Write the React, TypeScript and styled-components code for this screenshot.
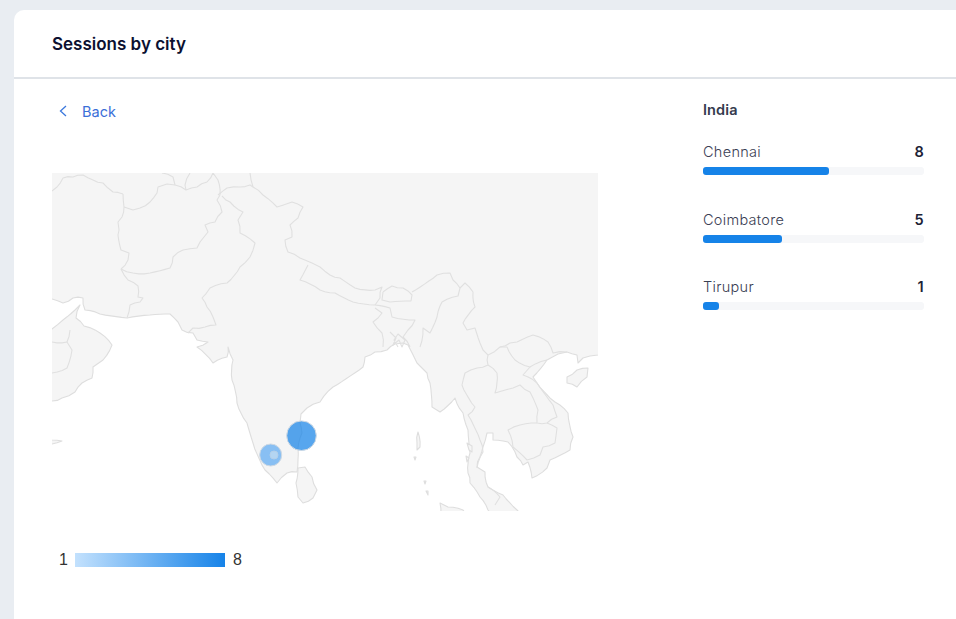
import React from 'react';
import styled, { createGlobalStyle } from 'styled-components';

const GlobalStyle = createGlobalStyle`
  html, body {
    margin: 0;
    height: 100%;
    overflow: hidden;
    background: #e9edf2;
  }
  #root {
    height: 100%;
  }
`;

const Page = styled.div`
  height: 100%;
  box-sizing: border-box;
  padding: 10px 0 0 14px;
  font-family: Inter, 'Open Sans', sans-serif;
`;

const Card = styled.section`
  height: 100%;
  background: #fff;
  border-radius: 10px 0 0 0;
`;

const Header = styled.header`
  height: 69px;
  box-sizing: border-box;
  padding: 24px 38px 0;
  border-bottom: 2px solid #dfe3e8;
`;

const Title = styled.h2`
  margin: 0;
  font-size: 17px;
  line-height: 20px;
  font-weight: 600;
  color: #0b1030;
`;

const Content = styled.div`
  display: flex;
  justify-content: space-between;
  padding: 0 32px 0 38px;
`;

const MapColumn = styled.div`
  width: 546px;
`;

const BackLink = styled.a`
  display: flex;
  align-items: center;
  gap: 12px;
  height: 20px;
  margin: 22px 0 52px;
  padding-left: 4px;
  font-size: 14.5px;
  color: #3b6fd8;
`;

const MapFrame = styled.svg`
  display: block;
`;

const Legend = styled.div`
  display: flex;
  align-items: center;
  gap: 7px;
  margin: 42px 0 0 7px;
  font-family: 'Liberation Sans', Arial, sans-serif;
  font-size: 16px;
  line-height: 14px;
  color: #333;
`;

const LegendScale = styled.div`
  width: 150px;
  height: 14px;
  margin-right: 1px;
  background: linear-gradient(90deg, #c3e1fd, #1683e8);
`;

const Breakdown = styled.aside`
  width: 221px;
`;

const Country = styled.h3`
  margin: 22px 0 23px;
  font-size: 14.5px;
  line-height: 18px;
  font-weight: 600;
  letter-spacing: 0.1px;
  color: #343a4e;
`;

const CityRow = styled.div`
  margin-bottom: 34.5px;
`;

const CityLine = styled.div`
  display: flex;
  justify-content: space-between;
  height: 20px;
  margin-bottom: 5px;
  font-size: 14.5px;
  font-weight: 300;
  line-height: 20px;
  letter-spacing: 0.3px;
  color: #3a4053;
`;

const CityValue = styled.span`
  font-weight: 600;
  color: #1c2236;
`;

const Track = styled.div`
  height: 8px;
  border-radius: 3px;
  background: #f6f7f9;
`;

const Fill = styled.div`
  height: 100%;
  border-radius: 3px;
  background: #1683e8;
`;

type Pt = number[];

// the source points are sparse, so break long edges up a little to get a hand-traced border
const rough = (pts: Pt[]) => {
  const out: Pt[] = [];
  pts.forEach((p, i) => {
    const next = pts[i + 1];
    out.push(p);
    if (!next) return;
    const dx = next[0] - p[0];
    const dy = next[1] - p[1];
    const len = Math.hypot(dx, dy);
    const steps = Math.floor(len / 5);
    for (let s = 1; s < steps; s++) {
      const t = s / steps;
      const off = Math.sin(p[0] * 12.9 + p[1] * 78.2 + s * 37.7) * 0.9;
      out.push([
        +(p[0] + dx * t - (dy / len) * off).toFixed(1),
        +(p[1] + dy * t + (dx / len) * off).toFixed(1),
      ]);
    }
  });
  return out;
};

const toPath = (pts: Pt[], close = false) => {
  const line = rough(close ? [...pts, pts[0]] : pts);
  return line.map((p, i) => `${i ? 'L' : 'M'}${p[0]} ${p[1]}`).join(' ') + (close ? ' Z' : '');
};

// main land mass, clockwise from the top left corner of the map
const mainland: Pt[] = [
  [40, 160], [610, 160], [610, 354], [598, 355], [590, 356], [583, 358], [578, 363], [577, 355], [567, 352], [558, 354],
  [547, 360], [533, 377], [537, 383], [555, 402], [568, 413], [573, 437], [570, 450], [550, 460], [547, 468],
  [532, 478], [528, 462], [523, 465], [517, 457], [508, 442], [493, 440], [493, 433], [487, 433], [483, 447],
  [480, 457], [477, 467], [485, 472], [488, 487], [503, 495], [517, 510], [525, 520], [495, 520], [488, 510], [480, 497],
  [470, 483], [468, 473], [470, 453], [468, 430], [463, 413], [455, 398], [440, 412], [432, 407], [430, 383],
  [427, 373], [417, 363], [408, 345], [403, 343], [395, 344], [387, 350], [375, 352], [365, 357], [363, 367],
  [333, 387], [320, 402], [307, 408], [301, 414], [300, 423], [302, 433], [298, 448], [297, 472], [287, 473],
  [277, 483], [265, 470], [253, 443], [247, 423], [237, 403], [232, 380], [233, 360], [228, 347], [227, 357],
  [213, 363], [197, 347], [208, 342], [197, 340], [193, 333], [182, 330], [178, 322], [170, 314], [150, 315],
  [127, 318], [100, 314], [85, 310], [83, 298], [73, 298], [63, 303], [52, 299], [40, 296],
];

const arabia: Pt[] = [
  [40, 336], [52, 329], [63, 320], [75, 310], [80, 305], [76, 318], [84, 326], [100, 333], [112, 345], [103, 360],
  [93, 367], [92, 378], [82, 383], [75, 392], [62, 398], [52, 401], [40, 402],
];

const islands: Pt[][] = [
  [[298, 468], [305, 467], [312, 477], [317, 490], [313, 498], [303, 503], [298, 497], [296, 483]],
  [[567, 377], [577, 370], [588, 368], [587, 377], [577, 387], [567, 383]],
  [[418, 432], [420, 447], [417, 450], [417, 443]],
  [[440, 503], [448, 507], [463, 510], [470, 520], [440, 520]],
  [[44, 439], [52, 440], [62, 441], [52, 444], [44, 444]],
  [[414, 457], [416, 457], [415, 460]],
  [[424, 481], [426, 481], [425, 484]],
  [[426, 491], [428, 491], [428, 495]],
  [[467, 443], [472, 446], [472, 452], [469, 450]],
  [[466, 456], [469, 458], [467, 462]],
];

const borders: Pt[][] = [
  // Iran, Afghanistan, Pakistan
  [[52, 191], [57, 187], [63, 178], [73, 177], [83, 175], [93, 180], [103, 183], [113, 192], [123, 194]],
  [[123, 194], [124, 207], [122, 217], [118, 222], [119, 230], [118, 235], [121, 250], [129, 253], [128, 260], [121, 269]],
  [[124, 207], [133, 210], [140, 208], [150, 202], [157, 193], [158, 187], [167, 184], [175, 185], [186, 190], [197, 187], [207, 182], [213, 173], [218, 180], [220, 195]],
  [[220, 195], [217, 200], [222, 212], [215, 222], [205, 225], [208, 232], [200, 242], [197, 248], [183, 250], [173, 257], [170, 268], [150, 273], [133, 273], [121, 269]],
  [[121, 269], [128, 280], [138, 286], [138, 297], [143, 298], [140, 302], [130, 305], [127, 318]],
  [[162, 173], [173, 177], [175, 185]],
  [[190, 173], [185, 185], [186, 190]],
  // north of Kashmir
  [[218, 195], [227, 188], [240, 187], [250, 185], [253, 187]],
  [[250, 173], [253, 187]],
  // Pakistan and India
  [[222, 196], [230, 202], [243, 212], [238, 220], [240, 233], [255, 243], [250, 257], [240, 267], [227, 283], [210, 288], [202, 298], [207, 307], [213, 317], [216, 325], [205, 327], [193, 328], [188, 333]],
  // India and China, Nepal
  [[253, 187], [263, 195], [277, 207], [292, 202], [303, 207], [298, 218], [290, 225], [292, 237], [285, 240], [288, 252], [300, 258], [312, 263], [320, 267], [330, 275], [340, 278], [355, 288], [375, 290], [382, 287], [380, 298], [375, 305]],
  [[308, 265], [300, 280], [320, 290], [335, 293], [353, 302], [375, 305]],
  // Bhutan
  [[383, 292], [392, 286], [403, 288], [412, 295], [411, 301], [390, 302], [382, 300], [383, 292]],
  // Arunachal, Myanmar
  [[412, 292], [437, 275], [450, 273], [453, 280], [460, 288], [458, 296], [442, 302], [437, 317], [430, 333], [423, 328], [420, 347]],
  [[460, 288], [465, 283], [473, 292], [475, 307], [463, 323], [467, 330], [475, 328], [480, 343], [483, 350], [488, 355]],
  // Bangladesh
  [[375, 305], [390, 308], [392, 317], [415, 320], [408, 330], [403, 337], [410, 347]],
  [[375, 308], [382, 313], [373, 322], [382, 333], [383, 347]],
  // delta
  [[390, 332], [396, 338], [393, 345], [399, 340], [402, 347], [405, 340], [398, 334], [394, 340], [398, 347]],
  // Myanmar, Laos, Thailand, Vietnam
  [[488, 355], [500, 347], [510, 343], [517, 342], [533, 335], [548, 342], [553, 353], [567, 352]],
  [[488, 355], [488, 365], [477, 368], [465, 373], [462, 385], [475, 407], [468, 415], [480, 440], [483, 452], [477, 468]],
  [[488, 365], [497, 373], [495, 393], [513, 388], [520, 385], [530, 392], [538, 410], [537, 423], [547, 423], [557, 417], [553, 405], [537, 383], [523, 375], [530, 367], [515, 360], [507, 347], [500, 347]],
  [[530, 367], [547, 360]],
  // Cambodia
  [[537, 423], [520, 425], [508, 430], [513, 447], [527, 460], [540, 455], [543, 447], [555, 443], [557, 428], [547, 423]],
  // Malaysia
  [[495, 505], [500, 497], [488, 487]],
  // Arabian peninsula
  [[52, 342], [67, 342], [72, 350], [67, 368], [52, 373]],
  [[70, 330], [67, 342]],
];

const cities = [
  { name: 'Chennai', value: 8 },
  { name: 'Coimbatore', value: 5 },
  { name: 'Tirupur', value: 1 },
];

const total = cities.reduce((sum, c) => sum + c.value, 0);

const SessionsMap = () => (
  <MapFrame width="546" height="338" viewBox="52 173 546 338">
    <g fill="#f5f5f5" stroke="#dedede" strokeWidth="1.1" strokeLinejoin="round">
      <path d={toPath(mainland, true)} />
      <path d={toPath(arabia, true)} />
      {islands.map((pts, i) => (
        <path key={i} d={toPath(pts, true)} />
      ))}
    </g>
    <g fill="none" stroke="#e0e0e0" strokeWidth="1.1" strokeLinejoin="round">
      {borders.map((pts, i) => (
        <path key={i} d={toPath(pts)} />
      ))}
    </g>
    <circle cx="301.5" cy="435.7" r="14.8" fill="#1683e8" fillOpacity="0.72" stroke="#cfd9e3" />
    <circle cx="270.7" cy="455" r="11" fill="#5aa8f2" fillOpacity="0.7" stroke="#cfd9e3" />
    <circle cx="274" cy="455" r="4" fill="#c3dcf2" fillOpacity="0.75" stroke="#b4d0ea" />
  </MapFrame>
);

export default function App() {
  return (
    <Page>
      <GlobalStyle />
      <Card>
        <Header>
          <Title>Sessions by city</Title>
        </Header>
        <Content>
          <MapColumn>
            <BackLink>
              <svg width="14" height="14" viewBox="0 0 14 14" fill="none">
                <path d="M10 2 L4.5 7 L10 12" stroke="#3b78dd" strokeWidth="1.3" />
              </svg>
              Back
            </BackLink>
            <SessionsMap />
            <Legend>
              <span>1</span>
              <LegendScale />
              <span>8</span>
            </Legend>
          </MapColumn>
          <Breakdown>
            <Country>India</Country>
            {cities.map(city => (
              <CityRow key={city.name}>
                <CityLine>
                  <span>{city.name}</span>
                  <CityValue>{city.value}</CityValue>
                </CityLine>
                <Track>
                  <Fill style={{ width: `${(city.value / total) * 100}%` }} />
                </Track>
              </CityRow>
            ))}
          </Breakdown>
        </Content>
      </Card>
    </Page>
  );
}
